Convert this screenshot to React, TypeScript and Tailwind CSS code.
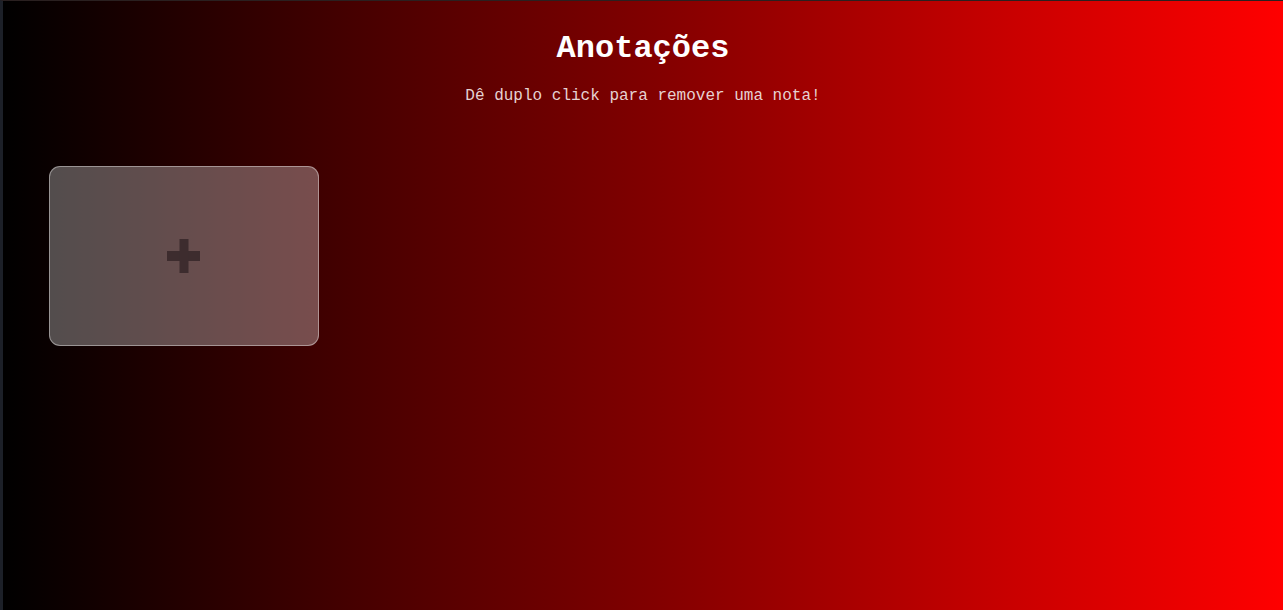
export default function App() {
  return (
    <div className="min-h-[610px] w-full border-l-[3px] border-t border-l-[#1c2028] border-t-[#2a2020] bg-[linear-gradient(to_right,#000000,#ff0000)] font-['Liberation_Mono','Courier_New',monospace]">
      <div className="flex flex-col items-center pt-[30px]">
        <h1 className="text-[32px] font-bold leading-[36px] text-white">Anotações</h1>
        <p className="mt-[19px] text-[16px] leading-[20px] text-[#e6d2d2]">
          Dê duplo click para remover uma nota!
        </p>
      </div>

      <div className="grid grid-cols-[270px] gap-6 pl-[46px] pt-[60px]">
        <button
          type="button"
          className="flex h-[180px] w-[270px] items-center justify-center rounded-[11px] border border-white/40 bg-white/30"
        >
          <svg width="34" height="34" viewBox="0 0 34 34" className="text-[#3d2c2e]" fill="currentColor">
            <rect x="0" y="12" width="33" height="10" />
            <rect x="12.5" y="0" width="9" height="34" />
          </svg>
        </button>
      </div>
    </div>
  );
}
